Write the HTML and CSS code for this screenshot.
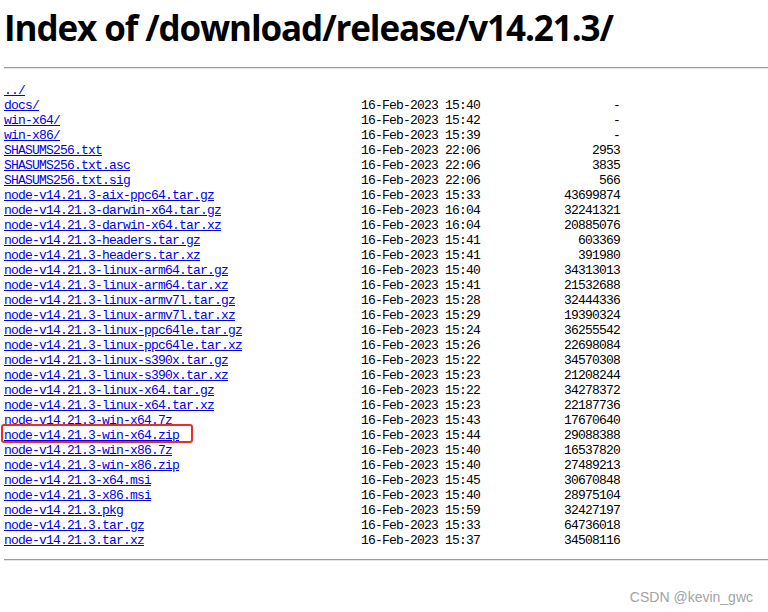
FILE: index.html
```html
<!DOCTYPE html>
<html>
<head>
<meta charset="utf-8">
<title>Index of /download/release/v14.21.3/</title>
<link rel="stylesheet" href="styles.css">
</head>
<body>
<h1 class="title">Index of /download/release/v14.21.3/</h1>
<hr class="rule">
<div class="listing">
  <div class="name"><a href="#">../</a></div><div class="date"></div><div class="size"></div>
  <div class="name"><a href="#">docs/</a></div><div class="date">16-Feb-2023 15:40</div><div class="size">-</div>
  <div class="name"><a href="#">win-x64/</a></div><div class="date">16-Feb-2023 15:42</div><div class="size">-</div>
  <div class="name"><a href="#">win-x86/</a></div><div class="date">16-Feb-2023 15:39</div><div class="size">-</div>
  <div class="name"><a href="#">SHASUMS256.txt</a></div><div class="date">16-Feb-2023 22:06</div><div class="size">2953</div>
  <div class="name"><a href="#">SHASUMS256.txt.asc</a></div><div class="date">16-Feb-2023 22:06</div><div class="size">3835</div>
  <div class="name"><a href="#">SHASUMS256.txt.sig</a></div><div class="date">16-Feb-2023 22:06</div><div class="size">566</div>
  <div class="name"><a href="#">node-v14.21.3-aix-ppc64.tar.gz</a></div><div class="date">16-Feb-2023 15:33</div><div class="size">43699874</div>
  <div class="name"><a href="#">node-v14.21.3-darwin-x64.tar.gz</a></div><div class="date">16-Feb-2023 16:04</div><div class="size">32241321</div>
  <div class="name"><a href="#">node-v14.21.3-darwin-x64.tar.xz</a></div><div class="date">16-Feb-2023 16:04</div><div class="size">20885076</div>
  <div class="name"><a href="#">node-v14.21.3-headers.tar.gz</a></div><div class="date">16-Feb-2023 15:41</div><div class="size">603369</div>
  <div class="name"><a href="#">node-v14.21.3-headers.tar.xz</a></div><div class="date">16-Feb-2023 15:41</div><div class="size">391980</div>
  <div class="name"><a href="#">node-v14.21.3-linux-arm64.tar.gz</a></div><div class="date">16-Feb-2023 15:40</div><div class="size">34313013</div>
  <div class="name"><a href="#">node-v14.21.3-linux-arm64.tar.xz</a></div><div class="date">16-Feb-2023 15:41</div><div class="size">21532688</div>
  <div class="name"><a href="#">node-v14.21.3-linux-armv7l.tar.gz</a></div><div class="date">16-Feb-2023 15:28</div><div class="size">32444336</div>
  <div class="name"><a href="#">node-v14.21.3-linux-armv7l.tar.xz</a></div><div class="date">16-Feb-2023 15:29</div><div class="size">19390324</div>
  <div class="name"><a href="#">node-v14.21.3-linux-ppc64le.tar.gz</a></div><div class="date">16-Feb-2023 15:24</div><div class="size">36255542</div>
  <div class="name"><a href="#">node-v14.21.3-linux-ppc64le.tar.xz</a></div><div class="date">16-Feb-2023 15:26</div><div class="size">22698084</div>
  <div class="name"><a href="#">node-v14.21.3-linux-s390x.tar.gz</a></div><div class="date">16-Feb-2023 15:22</div><div class="size">34570308</div>
  <div class="name"><a href="#">node-v14.21.3-linux-s390x.tar.xz</a></div><div class="date">16-Feb-2023 15:23</div><div class="size">21208244</div>
  <div class="name"><a href="#">node-v14.21.3-linux-x64.tar.gz</a></div><div class="date">16-Feb-2023 15:22</div><div class="size">34278372</div>
  <div class="name"><a href="#">node-v14.21.3-linux-x64.tar.xz</a></div><div class="date">16-Feb-2023 15:23</div><div class="size">22187736</div>
  <div class="name"><a href="#">node-v14.21.3-win-x64.7z</a></div><div class="date">16-Feb-2023 15:43</div><div class="size">17670640</div>
  <div class="name highlighted"><a href="#">node-v14.21.3-win-x64.zip</a></div><div class="date">16-Feb-2023 15:44</div><div class="size">29088388</div>
  <div class="name"><a href="#">node-v14.21.3-win-x86.7z</a></div><div class="date">16-Feb-2023 15:40</div><div class="size">16537820</div>
  <div class="name"><a href="#">node-v14.21.3-win-x86.zip</a></div><div class="date">16-Feb-2023 15:40</div><div class="size">27489213</div>
  <div class="name"><a href="#">node-v14.21.3-x64.msi</a></div><div class="date">16-Feb-2023 15:45</div><div class="size">30670848</div>
  <div class="name"><a href="#">node-v14.21.3-x86.msi</a></div><div class="date">16-Feb-2023 15:40</div><div class="size">28975104</div>
  <div class="name"><a href="#">node-v14.21.3.pkg</a></div><div class="date">16-Feb-2023 15:59</div><div class="size">32427197</div>
  <div class="name"><a href="#">node-v14.21.3.tar.gz</a></div><div class="date">16-Feb-2023 15:33</div><div class="size">64736018</div>
  <div class="name"><a href="#">node-v14.21.3.tar.xz</a></div><div class="date">16-Feb-2023 15:37</div><div class="size">34508116</div>
</div>
<hr class="rule rule-bottom">
<div class="watermark">CSDN @kevin_gwc</div>
</body>
</html>
```
FILE: styles.css
```css
html, body {
  margin: 0;
  padding: 0;
  background: #ffffff;
}

body {
  padding-left: 4px;
  height: 612px;
  overflow: hidden;
  position: relative;
  font-family: "Liberation Mono", monospace;
}

.title {
  font-family: "Open Sans", "Noto Sans", sans-serif;
  font-weight: 700;
  font-size: 35px;
  line-height: 50px;
  letter-spacing: -1.1px;
  color: #000;
  margin: 0;
  padding-top: 3px;
}

.rule {
  margin: 14px 0 0 0;
  height: 0;
  border: 0;
  border-top: 1px solid #9c9c9c;
  border-bottom: 1px solid #e6e6e6;
}

.rule-bottom {
  margin-top: 11px;
}

.listing {
  display: grid;
  grid-template-columns: 357px 119px 140px;
  grid-auto-rows: 15px;
  margin-top: 14px;
  font-family: "Liberation Mono", monospace;
  font-size: 13px;
  line-height: 15px;
  letter-spacing: -0.8px;
  color: #000;
  white-space: pre;
}

.listing a {
  color: #0000ee;
  text-decoration: underline;
}

.size {
  text-align: right;
}

.highlighted {
  position: relative;
}

.highlighted::after {
  content: "";
  position: absolute;
  left: -3px;
  top: -4px;
  width: 188px;
  height: 15px;
  border: 2px solid #ee2b2b;
  border-radius: 3px;
  pointer-events: none;
}

.watermark {
  position: absolute;
  right: 15px;
  bottom: 7px;
  font-family: "Liberation Sans", Arial, sans-serif;
  font-size: 14px;
  color: #a3a3a3;
}
```
